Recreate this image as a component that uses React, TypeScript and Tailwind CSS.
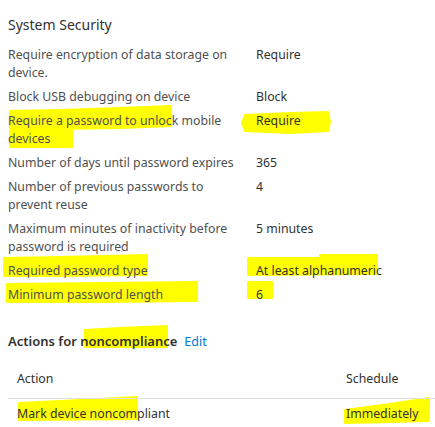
import React from "react";

const SETTINGS = [
  { label: "Require encryption of data storage on device.", value: "Require" },
  { label: "Block USB debugging on device", value: "Block" },
  { label: "Require a password to unlock mobile devices", value: "Require" },
  { label: "Number of days until password expires", value: "365" },
  { label: "Number of previous passwords to prevent reuse", value: "4" },
  { label: "Maximum minutes of inactivity before password is required", value: "5 minutes" },
  { label: "Required password type", value: "At least alphanumeric" },
  { label: "Minimum password length", value: "6" },
];

// marker strokes someone drew over the screenshot
const MARKS = [
  "10,111 60,110 120,108 171,106 171,126 120,128 60,129 10,129",
  "10,131 72,130 72,147 10,147",
  "245,115 290,113 328,112 330,122 328,131 290,133 245,131 242,123",
  "4,258 60,257 147,255 147,275 60,276 4,276",
  "7,284 100,283 197,282 197,301 100,302 7,302",
  "248,258 320,258 320,255 377,255 377,274 248,275",
  "248,282 272,282 272,298 248,298",
  "85,330 120,328 167,326 167,347 85,347",
  "19,403 80,400 137,397 137,419 19,420",
  "345,410 390,404 429,398 429,421 390,422 345,423",
];

export default function App() {
  return (
    <div
      className="relative w-[435px] h-[427px] overflow-hidden bg-white"
      style={{ fontFamily: '"Noto Sans", "Open Sans", sans-serif' }}
    >
      <svg
        className="pointer-events-none absolute inset-0"
        width="435"
        height="427"
        viewBox="0 0 435 427"
      >
        {MARKS.map((p) => (
          <polygon key={p} points={p} fill="#ffff00" strokeLinejoin="round" stroke="#ffff00" strokeWidth="2" />
        ))}
      </svg>

      <div className="relative pl-2 pt-[15px]">
        <h2 className="text-[14px] leading-5 text-[#323130]">System Security</h2>

        <div className="mt-[11px] flex flex-col gap-[6px] text-[12.3px] leading-[18px]">
          {SETTINGS.map((s) => (
            <div key={s.label} className="grid grid-cols-[248px_1fr]">
              <div className="pr-2 text-[#505050]">{s.label}</div>
              <div className="text-[#323130]">{s.value}</div>
            </div>
          ))}
        </div>

        <div className="mt-[27px] flex items-baseline gap-[7px]">
          <h3 className="text-[13px] leading-5 font-semibold text-[#323130]">
            Actions for noncompliance
          </h3>
          <span className="text-[12.5px] text-[#0078d4]">Edit</span>
        </div>

        <div className="mt-[18px] text-[12.3px] leading-[18px] text-[#323130]">
          <div className="grid grid-cols-[338px_1fr] border-b border-[#e1dfdd] pb-[10px]">
            <div className="pl-[9px]">Action</div>
            <div>Schedule</div>
          </div>
          <div className="grid grid-cols-[338px_1fr] pt-[6px]">
            <div className="pl-[9px]">Mark device noncompliant</div>
            <div>Immediately</div>
          </div>
        </div>
      </div>
    </div>
  );
}
